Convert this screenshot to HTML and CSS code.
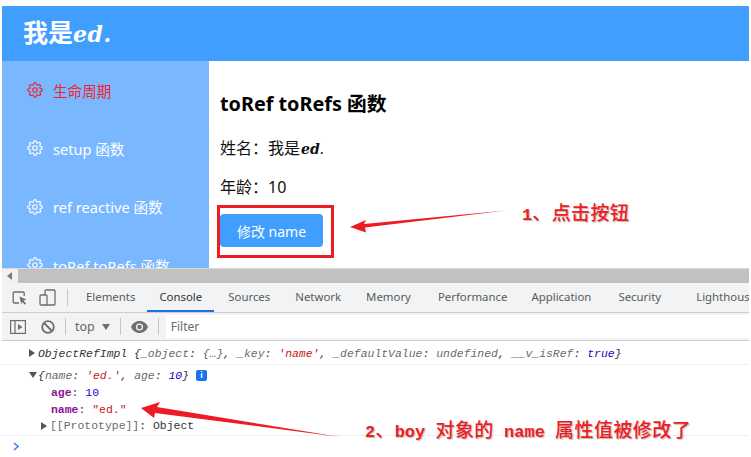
FILE: index.html
```html
<!DOCTYPE html>
<html lang="zh">
<head>
<meta charset="utf-8">
<title>toRef toRefs</title>
<link rel="stylesheet" href="styles.css">
</head>
<body>
<svg class="defs" width="0" height="0" aria-hidden="true">
  <symbol id="gear" viewBox="0 0 24 24">
    <circle cx="12" cy="12" r="3.4"/>
    <path d="M19.4 15a1.65 1.65 0 0 0 .33 1.82l.06.06a2 2 0 0 1 0 2.83 2 2 0 0 1-2.83 0l-.06-.06a1.65 1.65 0 0 0-1.82-.33 1.65 1.65 0 0 0-1 1.51V21a2 2 0 0 1-2 2 2 2 0 0 1-2-2v-.09A1.65 1.65 0 0 0 9 19.4a1.65 1.65 0 0 0-1.82.33l-.06.06a2 2 0 0 1-2.83 0 2 2 0 0 1 0-2.83l.06-.06a1.65 1.65 0 0 0 .33-1.82 1.65 1.65 0 0 0-1.51-1H3a2 2 0 0 1-2-2 2 2 0 0 1 2-2h.09A1.65 1.65 0 0 0 4.6 9a1.65 1.65 0 0 0-.33-1.82l-.06-.06a2 2 0 0 1 0-2.83 2 2 0 0 1 2.83 0l.06.06a1.65 1.65 0 0 0 1.82.33H9a1.65 1.65 0 0 0 1-1.51V3a2 2 0 0 1 2-2 2 2 0 0 1 2 2v.09a1.65 1.65 0 0 0 1 1.51 1.65 1.65 0 0 0 1.82-.33l.06-.06a2 2 0 0 1 2.83 0 2 2 0 0 1 0 2.83l-.06.06a1.65 1.65 0 0 0-.33 1.82V9a1.65 1.65 0 0 0 1.51 1H21a2 2 0 0 1 2 2 2 2 0 0 1-2 2h-.09a1.65 1.65 0 0 0-1.51 1z"/>
  </symbol>
</svg>
<div class="shot">
  <header class="app-header"><span>我是<i class="math">ed.</i></span></header>
  <div class="app-main">
    <nav class="side">
      <a class="side-item active"><svg class="gear"><use href="#gear"/></svg>生命周期</a>
      <a class="side-item"><svg class="gear"><use href="#gear"/></svg>setup 函数</a>
      <a class="side-item"><svg class="gear"><use href="#gear"/></svg>ref reactive 函数</a>
      <a class="side-item"><svg class="gear"><use href="#gear"/></svg>toRef toRefs 函数</a>
    </nav>
    <section class="content">
      <h3 class="title">toRef toRefs 函数</h3>
      <p class="line first">姓名&#xFF1A;我是<i class="math-sm">ed</i><span class="dot">.</span></p>
      <p class="line">年龄&#xFF1A;<span class="num">10</span></p>
      <button class="btn">修改 name</button>
    </section>
  </div>
  <div class="hscroll"><div class="hscroll-btn"><svg width="6" height="8" viewBox="0 0 6 8"><path d="M5 0v8L0 4z" fill="#7a7a7a"/></svg></div><div class="hscroll-track"></div></div>
  <div class="tabs">
    <svg class="tool" width="16" height="16" viewBox="0 0 16 16" fill="none" stroke="#6e6e6e" stroke-width="1.3"><path d="M7 13H2.2a1 1 0 0 1-1-1V3a1 1 0 0 1 1-1h9a1 1 0 0 1 1 1v3"/><path d="M7.5 6.5l7 3-3 1 2.5 3-1.3 1.2-2.5-3-1 2.6z" fill="#6e6e6e" stroke="none"/></svg>
    <svg class="tool tool2" width="18" height="18" viewBox="0 0 18 18" fill="none" stroke="#6e6e6e" stroke-width="1.3"><rect x="6" y="1" width="10" height="15" rx="1"/><rect x="1" y="6" width="7" height="10" rx="1" fill="#f1f3f4"/></svg>
    <span class="vsep"></span>
    <span class="tab t1">Elements</span>
    <span class="tab t2 on">Console</span>
    <span class="tab t3">Sources</span>
    <span class="tab t4">Network</span>
    <span class="tab t5">Memory</span>
    <span class="tab t6">Performance</span>
    <span class="tab t7">Application</span>
    <span class="tab t8">Security</span>
    <span class="tab t9">Lighthouse</span>
  </div>
  <div class="bar">
    <svg class="tool tool-first" width="16" height="14" viewBox="0 0 16 14" fill="none" stroke="#6e6e6e" stroke-width="1.2"><rect x=".6" y=".6" width="14.8" height="12.8"/><path d="M5 1v12"/><path d="M8 4l4.500 3L8 10z" fill="#6e6e6e" stroke="none"/></svg>
    <svg class="tool ban" width="14" height="14" viewBox="0 0 14 14" fill="none" stroke="#6e6e6e" stroke-width="1.8"><circle cx="7" cy="7" r="5.800"/><path d="M3 3l8 8"/></svg>
    <span class="vsep"></span>
    <span class="ctx">top</span>
    <svg class="caret" width="8" height="6" viewBox="0 0 8 6"><path d="M0 0h8L4 6z" fill="#6e6e6e"/></svg>
    <span class="vsep"></span>
    <svg class="eye" width="17" height="12" viewBox="0 0 17 12"><path d="M8.500 0C4.500 0 1.500 2.500 0 6c1.500 3.500 4.500 6 8.500 6s7-2.500 8.500-6C15.500 2.500 12.500 0 8.500 0z" fill="#6e6e6e"/><circle cx="8.500" cy="6" r="3.600" fill="#f1f3f4"/><circle cx="8.500" cy="6" r="2.200" fill="#6e6e6e"/></svg>
    <span class="vsep"></span>
    <div class="filter">Filter</div>
  </div>
  <div class="console">
    <div class="row r1"><span class="tri"></span><i class="ink">ObjectRefImpl {<span class="k">_object</span>: <span class="k">{…}</span>, <span class="k">_key</span>: <span class="s">'name'</span>, <span class="k">_defaultValue</span>: <span class="k">undefined</span>, <span class="k">__v_isRef</span>: <span class="n">true</span>}</i></div>
    <div class="row r2"><span class="tri open"></span><i class="ink">{<span class="k">name</span>: <span class="s">'ed.'</span>, <span class="k">age</span>: <span class="n">10</span>}</i><span class="info">i</span></div>
    <div class="prop"><b class="pk">age</b>: <span class="n">10</span></div>
    <div class="prop"><b class="pk">name</b>: <span class="s">"ed."</span></div>
    <div class="prop proto"><span class="tri"></span><span class="k">[[Prototype]]</span>: Object</div>
    <div class="prompt"><svg width="7" height="9" viewBox="0 0 7 9" fill="none" stroke="#367cf1" stroke-width="1.500"><path d="M1 1l4 3.500L1 8"/></svg></div>
  </div>

  <div class="redbox"></div>
  <svg class="arrows" width="751" height="457" viewBox="0 0 751 457">
    <path d="M350 227l16-7-2 4 142-13.500-141 17 1 5z" fill="#ed1c24"/>
    <path d="M141 408l19-6-3 5 183 30-185-24-1 5z" fill="#ed1c24"/>
  </svg>
  <div class="note n1"><b class="latin">1</b>、点击按钮</div>
  <div class="note n2"><b class="latin">2</b>、<b class="latin">boy </b>对象的<b class="latin"> name </b>属性值被修改了</div>
</div>
</body>
</html>
```
FILE: styles.css
```css
* { box-sizing: border-box; }
html, body { margin: 0; background: #fff; }
body { width: 751px; height: 457px; overflow: hidden; font-family: "Noto Sans", "Noto Sans CJK SC", sans-serif; }
.defs { position: absolute; }
.shot { position: relative; width: 751px; height: 457px; padding: 6px 2px 0; overflow: hidden; }

.app-header { height: 55px; background: #409eff; color: #fff; display: flex; align-items: center; padding: 0 0 6px 21px; font-family: "Noto Sans CJK SC", sans-serif; font-size: 25px; font-weight: 700; }
.math { font-family: "DejaVu Serif", serif; font-size: 22px; font-style: italic; font-weight: 700; letter-spacing: .5px; }
.math-sm { font-family: "DejaVu Serif", serif; font-weight: 700; font-size: 14px; margin-left: 1px; }
.dot { font-family: "Liberation Serif", serif; }
.num { font-family: "Noto Sans", sans-serif; }
.app-main { height: 207px; display: flex; overflow: hidden; }

.side { width: 207px; flex: none; background: #79b8ff; margin-top: 0; }
.side-item { height: 58.300px; display: flex; align-items: center; padding-left: 25px; color: #fff; font-size: 14.600px; font-family: "Noto Sans", "Noto Sans CJK SC", sans-serif; }
.side-item.active { color: #f5222d; }
.gear { width: 16px; height: 16px; margin-right: 10px; fill: none; stroke: currentColor; stroke-width: 1.700; }

.content { flex: 1; padding: 0 0 0 11px; color: #111; }
.title { margin: 31px 0 0; font-size: 19.800px; line-height: 24px; font-weight: 700; font-family: "Noto Sans", "Noto Sans CJK SC", sans-serif; color: #000; }
.line { margin: 13px 0 0; font-size: 16px; line-height: 24px; font-family: "Noto Sans CJK SC", "Noto Sans", sans-serif; }
.line.first { margin-top: 19px; }
.btn { display: block; margin-top: 15px; width: 103px; height: 33px; padding: 0; background: #409eff; color: #fff; border: 0; border-radius: 4px; font-size: 14px; font-family: "Noto Sans", "Noto Sans CJK SC", sans-serif; }

.hscroll { height: 15px; display: flex; border-top: 1px solid #dadada; }
.hscroll-btn { width: 16px; background: #f1f1f1; display: flex; align-items: center; justify-content: center; }
.hscroll-track { flex: 1; background: #c1c1c1; }

.tabs { height: 30px; background: #f1f3f4; border-bottom: 1px solid #cdcdcd; display: flex; align-items: center; overflow: hidden; font-size: 11.400px; color: #5a5a5a; }
.tool { flex: none; margin-left: 10px; }
.tool2 { margin-left: 11px; }
.tool-first { margin-left: 8px; }
.tab { height: 29px; line-height: 28px; flex: none; }
.tab.on { color: #333; box-shadow: inset 0 -2px 0 #1a73e8; padding: 0 12px; margin-left: 12px; margin-right: 14px; }
.vsep { width: 1px; height: 17px; background: #c4c4c4; flex: none; margin-left: 10px; }
.t1 { margin-left: 18px; }
.t4, .t5 { margin-left: 25px; }
.t6 { margin-left: 27px; }
.t7 { margin-left: 24px; }
.t8 { margin-left: 27px; }
.t9 { margin-left: 35px; }

.bar { height: 28px; background: #f1f3f4; border-bottom: 1px solid #cdcdcd; display: flex; align-items: center; font-size: 12px; color: #666; }
.ban { margin-left: 15px; }
.ctx { margin-left: 9px; font-size: 12.500px; }
.caret { margin-left: 7px; }
.eye { margin-left: 10px; }
.filter { flex: 1; height: 23px; margin-left: 7px; padding: 3px 5px; background: #fff; line-height: 17px; color: #6b6b6b; }

.console { font-family: "Liberation Mono", monospace; font-size: 11.450px; color: #333; }
.row { display: flex; align-items: center; white-space: pre; }
.r1 { height: 24px; padding: 1px 0 0 27px; border-bottom: 1px solid #f0f0f0; }
.r2 { height: 20px; padding-left: 27px; }
.ink { color: #333; }
.k { color: #6a6a6a; }
.s { color: #c41a16; }
.n { color: #1c00cf; }
.tri { width: 0; height: 0; border-left: 6px solid #555; border-top: 4px solid transparent; border-bottom: 4px solid transparent; margin-right: 3px; flex: none; display: inline-block; }
.tri.open { border-top: 6px solid #555; border-bottom: 0; border-left: 4px solid transparent; border-right: 4px solid transparent; margin-right: 1px; width: 8px; }
.info { width: 11px; height: 11px; margin-left: 7px; background: #1a73e8; color: #fff; border-radius: 2px; font: 700 9px/11px "Liberation Sans", sans-serif; text-align: center; }
.prop { height: 16.500px; line-height: 16.500px; padding-left: 49px; white-space: pre; }
.pk { color: #881391; font-weight: 700; }
.proto { padding-left: 39px; display: flex; align-items: center; }
.prompt { margin-top: 0; border-top: 1px solid #f0f0f0; padding: 5px 0 0 11px; }

.redbox { position: absolute; left: 217px; top: 205px; width: 117px; height: 53px; border: 3px solid #ed1c24; }
.arrows { position: absolute; left: 0; top: 0; pointer-events: none; }
.note { position: absolute; color: #f01c24; font-size: 19px; line-height: 24px; font-family: "Noto Sans CJK SC", sans-serif; font-weight: 500; white-space: pre; text-shadow: 1px 1px 1px #b9b9b9; letter-spacing: .45px; }
.latin { font-family: "Liberation Mono", monospace; font-weight: 700; font-size: 17px; letter-spacing: 0; }
.n1 { left: 522px; top: 200px; }
.n2 { left: 365px; top: 417px; }
```
